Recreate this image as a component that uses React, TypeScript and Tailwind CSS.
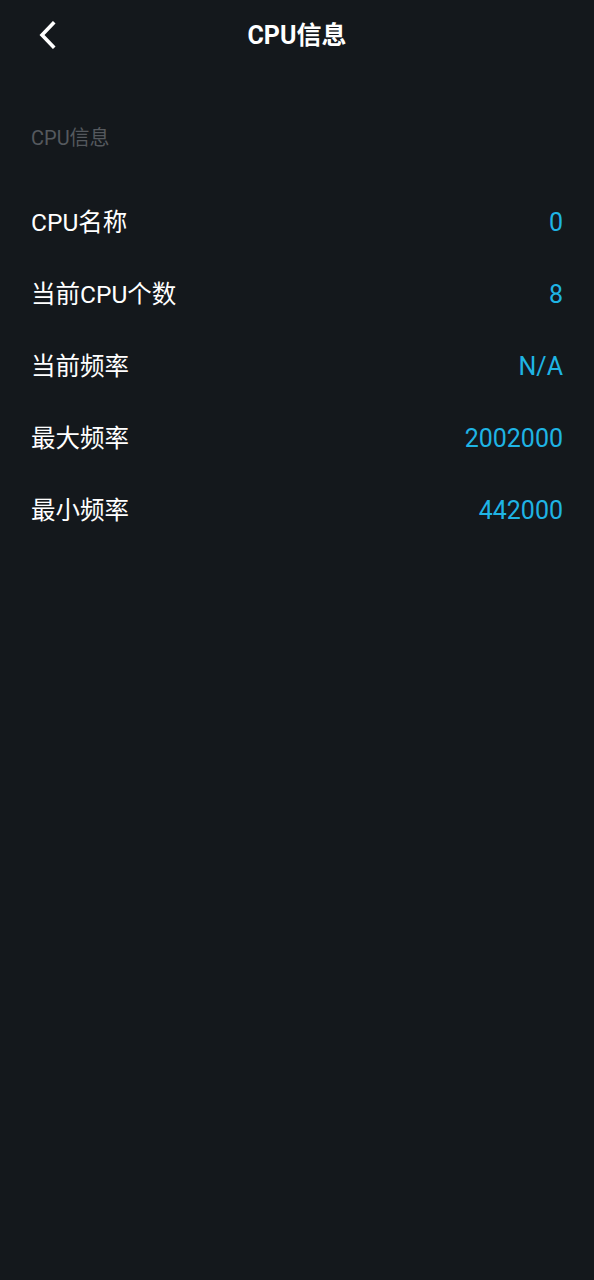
const rows: { label: string; value: string }[] = [
  { label: 'CPU名称', value: '0' },
  { label: '当前CPU个数', value: '8' },
  { label: '当前频率', value: 'N/A' },
  { label: '最大频率', value: '2002000' },
  { label: '最小频率', value: '442000' }
]

function App() {
  return (
    <div
      className="min-h-[1280px] w-full bg-[#14181c] text-white"
      style={{ fontFamily: 'Roboto, "Noto Sans CJK SC", sans-serif' }}
    >
      {/* Top bar */}
      <header className="relative flex h-[70px] items-center justify-center">
        <button className="absolute left-[34px] top-[20px] flex h-[30px] w-[26px] items-center justify-center">
          <svg width="20" height="28" viewBox="0 0 20 28" fill="none">
            <path
              d="M16 2.5 L5 14 L16 25.5"
              stroke="white"
              strokeWidth="3.6"
              strokeLinecap="square"
              strokeLinejoin="miter"
            />
          </svg>
        </button>
        <h1 className="text-[25px] font-bold leading-none">CPU信息</h1>
      </header>

      <div className="px-[31px]">
        <div className="pt-[56px] text-[20px] leading-[24px] text-[#55595e]">CPU信息</div>

        <div className="mt-[37px]">
          {rows.map((r) => (
            <div key={r.label} className="flex h-[72px] items-center justify-between">
              <span className="text-[24.5px] text-white">{r.label}</span>
              <span className="text-[25px] text-[#1fb4e4]">{r.value}</span>
            </div>
          ))}
        </div>
      </div>
    </div>
  )
}

export default App
